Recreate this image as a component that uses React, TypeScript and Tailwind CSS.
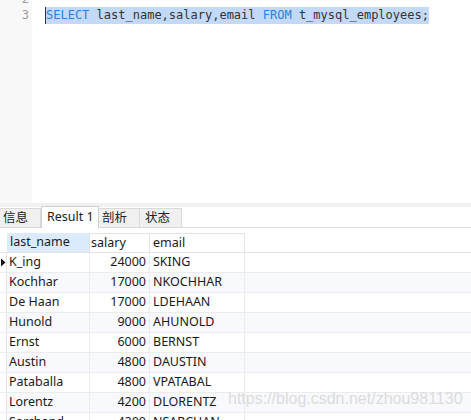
import React from "react";

const rows: [string, string, string][] = [
  ["K_ing", "24000", "SKING"],
  ["Kochhar", "17000", "NKOCHHAR"],
  ["De Haan", "17000", "LDEHAAN"],
  ["Hunold", "9000", "AHUNOLD"],
  ["Ernst", "6000", "BERNST"],
  ["Austin", "4800", "DAUSTIN"],
  ["Pataballa", "4800", "VPATABAL"],
  ["Lorentz", "4200", "DLORENTZ"],
  ["Sarchand", "4200", "NSARCHAN"],
];

export default function App() {
  const ui = { fontFamily: '"Noto Sans", "Noto Sans CJK SC", sans-serif' };
  return (
    <div className="relative w-[471px] h-[420px] overflow-hidden bg-white" style={ui}>
      {/* Editor */}
      <div className="flex h-[203px]">
        <div className="w-[32px] bg-[#f8f8f8] text-[#999] text-[12px] leading-[17px] text-right pr-[3px]" style={{ fontFamily: '"DejaVu Sans Mono", monospace' }}>
          <div className="-mt-[8px] h-[15px] leading-[15px]">2</div>
          <div>3</div>
        </div>
        <div className="flex-1 pl-[13px] text-[12px] leading-[17px] text-[#333]" style={{ fontFamily: '"DejaVu Sans Mono", monospace' }}>
          <div className="-mt-[8px] h-[15px]"></div>
          <div className="inline-block bg-[#c2daf7] border-l border-[#333]">
            <span className="text-[#2d7ee0]">SELECT</span> last_name,salary,email <span className="text-[#2d7ee0]">FROM</span> t_mysql_employees;
          </div>
        </div>
      </div>
      {/* band */}
      <div className="h-[4px] bg-[#f0f0f0]"></div>
      {/* tabs */}
      <div className="flex items-end h-[21px] border-b border-[#dadada] text-[12.5px] text-[#222]">
        <div className="h-[19px] w-[41px] bg-[#f0f0f0] border-r border-t border-[#dadada] flex items-center pl-[3px] leading-none">信息</div>
        <div className="h-[22px] w-[58px] bg-white border-x border-t border-[#d0d0d0] -mb-px flex items-center pl-[5px] leading-none">Result 1</div>
        <div className="h-[19px] w-[41px] bg-[#f0f0f0] border-r border-t border-[#dadada] flex items-center pl-[3px] leading-none">剖析</div>
        <div className="h-[19px] w-[42px] bg-[#f0f0f0] border-r border-t border-[#dadada] flex items-center pl-[5px] leading-none">状态</div>
      </div>
      {/* table */}
      <div className="mt-[5px] text-[12.5px] text-[#1a1a1a]">
        <div className="flex h-[20px] border-b border-[#e3e3e3]">
          <div className="w-[7px]"></div>
          <div className="w-[83px] bg-[#dcebfb] flex items-center pl-[3px] border-r border-[#e3e3e3]">last_name</div>
          <div className="w-[60px] flex items-center pl-[1px] border-r border-t border-[#e3e3e3]">salary</div>
          <div className="w-[95px] flex items-center pl-[3px] border-r border-t border-[#e3e3e3]">email</div>
        </div>
        {rows.map((r, i) => (
          <div key={i} className={`flex h-[20px] border-b border-[#ececec] ${i % 2 === 1 ? "bg-[#f7f9fc]" : "bg-white"}`}>
            <div className="w-[7px] flex items-center border-r border-[#e3e3e3] bg-white">
              {i === 0 ? <svg width="6" height="9" viewBox="0 0 6 9"><path d="M1 0.5 L5.5 4.5 L1 8.5 Z" fill="#111" /></svg> : null}
            </div>
            <div className="w-[83px] flex items-center pl-[2px] border-r border-[#ececec]">{r[0]}</div>
            <div className="w-[60px] flex items-center justify-end pr-[3px] border-r border-[#ececec]">{r[1]}</div>
            <div className="w-[95px] flex items-center pl-[3px] border-r border-[#ececec]">{r[2]}</div>
          </div>
        ))}
      </div>
      <div className="absolute left-[228px] top-[391px] text-[16px] text-[#dcdcdc] leading-none" style={{ fontFamily: '"Liberation Sans", Arial, sans-serif' }}>
        https://blog.csdn.net/zhou981130
      </div>
    </div>
  );
}
